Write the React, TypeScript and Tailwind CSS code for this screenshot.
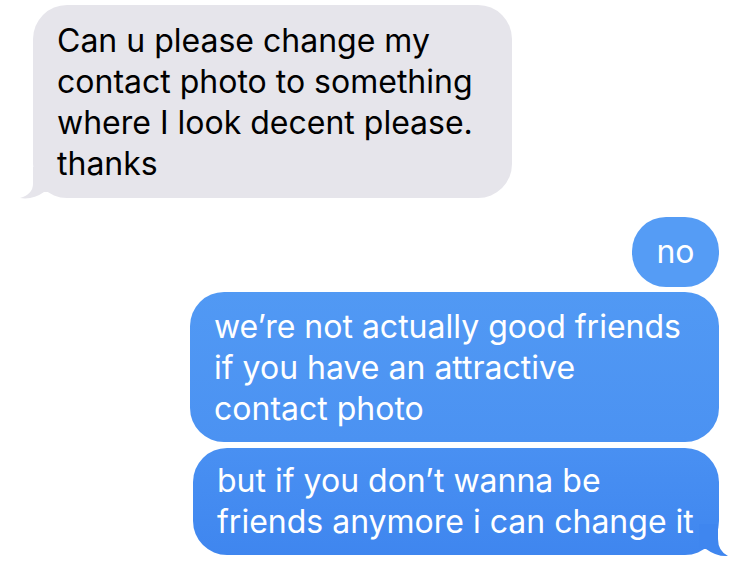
import React from "react";

const font = { fontFamily: "Inter, 'Liberation Sans', sans-serif" };

export default function App() {
  return (
    <div
      className="w-[750px] h-[561px] bg-white overflow-hidden flex flex-col pt-[5px] text-[32px] leading-[41px]"
      style={font}
    >
      <div className="relative ml-[33px] w-[479px] h-[193px] rounded-[34px] bg-[#e6e5eb] text-black pl-[24px] pt-[15px]">
        <div>Can u please change my</div>
        <div>contact photo to something</div>
        <div>where I look decent please.</div>
        <div>thanks</div>
        <svg className="absolute left-[-15px] bottom-[-1px]" width="34" height="32" viewBox="0 0 34 32">
          <path d="M15 0 L15 17 Q15 27 2 31 Q15 33 26 25 L34 25 L34 0 Z" fill="#e6e5eb" />
        </svg>
      </div>

      <div className="self-end mr-[31px] mt-[19px] w-[87px] h-[70px] rounded-[34px] bg-[#559cf5] text-white flex items-center justify-center pb-[1px]">
        no
      </div>

      <div className="self-end mr-[31px] mt-[5px] w-[529px] h-[150px] rounded-[34px] bg-gradient-to-b from-[#5199f4] to-[#4b92f2] text-white pl-[24px] pt-[14px]">
        <div>we’re not actually good friends</div>
        <div>if you have an attractive</div>
        <div>contact photo</div>
      </div>

      <div className="relative self-end mr-[31px] mt-[6px] w-[526px] h-[107px] rounded-[34px] bg-gradient-to-b from-[#4990f2] to-[#3f86ef] text-white pl-[24px] pt-[12px]">
        <div>but if you don’t wanna be</div>
        <div>friends anymore i can change it</div>
        <svg className="absolute right-[-14px] bottom-[-2px]" width="34" height="33" viewBox="0 0 34 33">
          <path d="M19 0 L19 15 Q19 27 29 32 Q18 33 7 25 L0 25 L0 0 Z" fill="#3f86ef" />
        </svg>
      </div>
    </div>
  );
}
